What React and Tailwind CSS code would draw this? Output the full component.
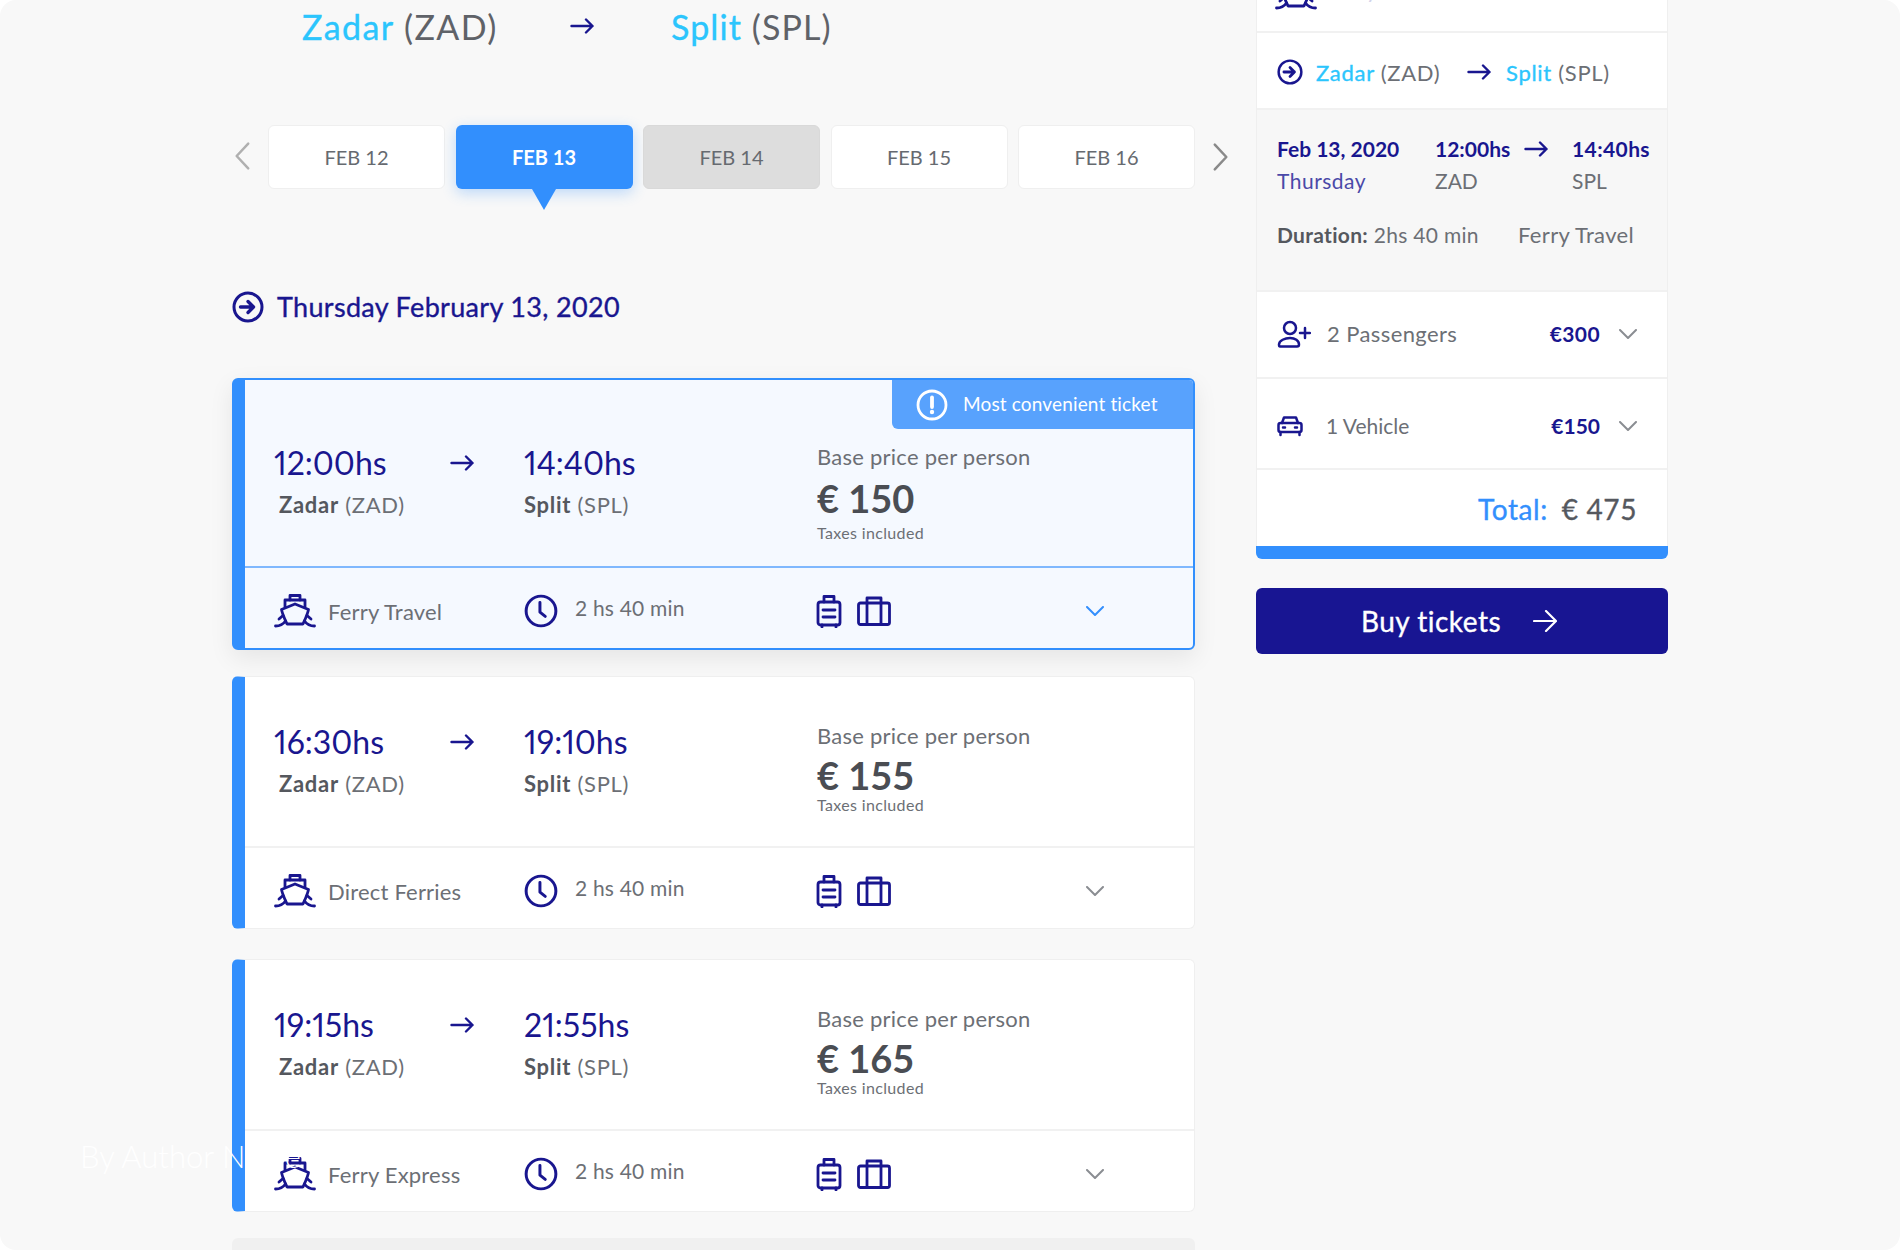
const NAVY = 'text-[#19168f]';
const MEDIUM = '[-webkit-text-stroke:0.35px_currentColor]';

// Small ferry drawing, used in the ticket rows
const ShipIcon = ({ className }) => (
  <svg viewBox="0 0 42 34" fill="none" stroke="currentColor" strokeWidth="2.800" strokeLinejoin="round" strokeLinecap="round" className={className}>
    <path d="M16 6.500V2h10v4.500" />
    <path d="M11 13.500V6.500h20v7" />
    <path d="M21 10.500L7.500 16c1 5 3 9 5.500 14.500h16c2.500-5.500 4.500-9.500 5.500-14.500z" />
    <path d="M1.500 32.500c4.500 0 7.500-1.500 10-5M40.500 32.500c-4.500 0-7.500-1.500-10-5" />
    <path d="M9 22l-4 3.500M33 22l4 3.500" />
  </svg>
);

const ClockIcon = ({ className }) => (
  <svg viewBox="0 0 32 32" fill="none" stroke="currentColor" strokeWidth="2.800" strokeLinecap="round" strokeLinejoin="round" className={className}>
    <circle cx="16" cy="16" r="14" />
    <path d="M15 8v9l5 4" />
  </svg>
);

const BagIcon = ({ className }) => (
  <svg viewBox="0 0 26 34" fill="none" stroke="currentColor" strokeWidth="2.800" strokeLinejoin="round" strokeLinecap="round" className={className}>
    <rect x="2" y="8" width="22" height="23" rx="2.500" />
    <path d="M8 8V2.500h10V8M7 16h12M7 23h12M6 31v2M20 31v2" />
  </svg>
);

const CaseIcon = ({ className }) => (
  <svg viewBox="0 0 34 30" fill="none" stroke="currentColor" strokeWidth="2.800" strokeLinejoin="round" className={className}>
    <rect x="1.500" y="7" width="31" height="21.500" rx="2" />
    <path d="M10 28V2h14v26" />
  </svg>
);

const CircleArrow = ({ className }) => (
  <svg viewBox="0 0 32 32" fill="none" stroke="currentColor" className={className}>
    <circle cx="16" cy="16" r="14" strokeWidth="3" />
    <path d="M8.500 16h13M16 10.500l5.500 5.500-5.500 5.500" strokeWidth="3.400" strokeLinecap="round" strokeLinejoin="round" />
  </svg>
);

const AlertIcon = ({ className }) => (
  <svg viewBox="0 0 32 32" fill="none" stroke="currentColor" className={className}>
    <circle cx="16" cy="16" r="14" strokeWidth="2.800" />
    <path d="M16 8.500v9.500" strokeWidth="3.800" strokeLinecap="round" />
    <circle cx="16" cy="23" r="2.200" fill="currentColor" stroke="none" />
  </svg>
);

const UserPlusIcon = ({ className }) => (
  <svg viewBox="0 0 34 28" fill="none" stroke="currentColor" strokeWidth="2.500" strokeLinecap="round" strokeLinejoin="round" className={className}>
    <circle cx="13" cy="8" r="6" />
    <path d="M3 26.500h17a2 2 0 0 0 2-2c0-4-4-6.500-9-6.500s-11 2.500-11 6.500c0 1 .500 2 1 2z" />
    <path d="M28 8v10M23 13h10" />
  </svg>
);

const CarIcon = ({ className }) => (
  <svg viewBox="0 0 26 22" fill="none" stroke="currentColor" strokeWidth="2.500" strokeLinecap="round" strokeLinejoin="round" className={className}>
    <path d="M5 8l2-5.500h12L21 8" />
    <rect x="1.500" y="8" width="23" height="9" rx="2" />
    <path d="M3.500 17v3M22.500 17v3" />
    <path d="M6 12.500h2M18 12.500h2" />
  </svg>
);

const Arrow = ({ className }) => (
  <svg viewBox="0 0 24 16" fill="none" stroke="currentColor" strokeWidth="2.400" strokeLinecap="round" strokeLinejoin="round" className={`w-6 h-4 shrink-0 ${className}`}>
    <path d="M1.500 8h21M16 1.500L22.500 8 16 14.500" />
  </svg>
);

const ChevronDown = ({ className }) => (
  <svg viewBox="0 0 18 10" fill="none" stroke="currentColor" strokeWidth="2" strokeLinecap="round" strokeLinejoin="round" className={`w-[18px] h-[10px] shrink-0 ${className}`}>
    <path d="M1 1l8 8 8-8" />
  </svg>
);

const dates = [
  { label: 'FEB 12', tone: 'bg-white text-[#666a70] border border-[#efefef]' },
  { label: 'FEB 13', tone: 'bg-[#328ffd] text-white font-bold shadow-[0_4px_14px_rgba(50,143,253,0.3)]', active: true },
  { label: 'FEB 14', tone: 'bg-[#dddddd] text-[#666a70] border border-[#d9d9d9]' },
  { label: 'FEB 15', tone: 'bg-white text-[#666a70] border border-[#efefef]' },
  { label: 'FEB 16', tone: 'bg-white text-[#666a70] border border-[#efefef]' },
];

const tickets = [
  { depart: '12:00hs', arrive: '14:40hs', price: '€ 150', operator: 'Ferry Travel', selected: true, space: 'mb-[26px]' },
  { depart: '16:30hs', arrive: '19:10hs', price: '€ 155', operator: 'Direct Ferries', space: 'mb-[30px]' },
  { depart: '19:15hs', arrive: '21:55hs', price: '€ 165', operator: 'Ferry Express', space: 'mb-[26px]' },
];

const TicketCard = ({ ticket }) => {
  const { depart, arrive, price, operator, selected, space } = ticket;
  return (
    <div
      className={`relative flex rounded-md overflow-hidden border-l-[13px] border-l-[#328ffd] ${space} ${
        selected
          ? 'h-[272px] bg-[#f5f9ff] border-y-2 border-r-2 border-[#328ffd] shadow-[0_8px_24px_rgba(0,0,0,0.08)]'
          : 'h-[253px] bg-white border-y border-r border-[#efefef]'
      }`}
    >
      {selected && (
        <div className="absolute top-0 right-0 flex items-center gap-[15px] w-[301px] h-[49px] pl-6 bg-[#58a2fd] rounded-bl-md text-white text-[19px] tracking-[0.15px]">
          <AlertIcon className="w-8 h-8" />
          <span>Most convenient ticket</span>
        </div>
      )}
      <div className="flex flex-col flex-1">
        <div className={`flex flex-1 pl-[29px] border-b-2 ${selected ? 'border-[#7fb8fe] pt-[63px]' : 'border-[#f1f1f1] pt-[45px]'}`}>
          <div className="w-[250px]">
            <div className="flex items-center">
              <span className={`w-[176px] text-[32px] leading-[40px] proportional-nums ${NAVY}`}>{depart}</span>
              <Arrow className={NAVY} />
            </div>
            <p className="mt-2 pl-[5px] text-[22px] tracking-[0.7px] leading-7 text-[#6c6f75]">
              <span className="font-bold text-[#55585e]">Zadar</span> (ZAD)
            </p>
          </div>
          <div className="w-[293px]">
            <span className={`block text-[32px] leading-[40px] proportional-nums ${NAVY}`}>{arrive}</span>
            <p className="mt-2 text-[22px] tracking-[0.7px] leading-7 text-[#6c6f75]">
              <span className="font-bold text-[#55585e]">Split</span> (SPL)
            </p>
          </div>
          <div>
            <p className="text-[22px] tracking-[0.25px] leading-7 text-[#6c6f75]">Base price per person</p>
            <p className={`text-[38px] font-bold text-[#4a4d53] ${selected ? 'leading-[44px] mt-[5px]' : 'leading-[39px] mt-[6px]'}`}>{price}</p>
            <p className={`text-[16px] tracking-[0.35px] leading-5 text-[#6c6f75] ${selected ? 'mt-[3px]' : ''}`}>Taxes included</p>
          </div>
        </div>
        <div className="flex items-center h-[80px] pt-[5px] pl-[29px]">
          <div className="flex items-center w-[249px]">
            <ShipIcon className={`w-[42px] h-[35px] ${NAVY}`} />
            <span className="ml-3 mt-[1px] text-[22px] tracking-[0.2px] text-[#6c6f75]">{operator}</span>
          </div>
          <div className="flex items-center w-[293px] pl-[1px]">
            <ClockIcon className={`w-[34px] h-[34px] ${NAVY}`} />
            <span className="ml-[17px] -mt-[5px] text-[21px] tracking-[0.2px] text-[#6c6f75]">2 hs 40 min</span>
          </div>
          <BagIcon className={`w-[26px] h-[34px] ${NAVY}`} />
          <CaseIcon className={`ml-[15px] w-[34px] h-[30px] ${NAVY}`} />
          <ChevronDown className={`ml-[195px] ${selected ? 'text-[#328ffd]' : 'text-[#8a8d92]'}`} />
        </div>
      </div>
    </div>
  );
};

const App = () => {
  return (
    <div
      className="relative h-[1250px] overflow-hidden rounded-2xl bg-[#f8f8f8] flex gap-[61px] pl-[232px]"
      style={{ fontFamily: 'Lato, "Noto Sans", sans-serif' }}
    >
      {/* ===== Results column ===== */}
      <div className="w-[963px] shrink-0">
        <div className="flex items-center h-[52px] pl-[70px] text-[34px] tracking-[1.1px] text-[#5f6268]">
          <span className="w-[268px] tracking-[1.4px]">
            <span className={`text-[#2bc5fd] ${MEDIUM}`}>Zadar</span> (ZAD)
          </span>
          <Arrow className={NAVY} />
          <span className="ml-[77px]">
            <span className={`text-[#2bc5fd] ${MEDIUM}`}>Split</span> (SPL)
          </span>
        </div>

        {/* Date picker */}
        <div className="flex items-center mt-[73px] -mr-[34px]">
          <svg viewBox="0 0 18 32" fill="none" stroke="currentColor" strokeWidth="2.800" strokeLinecap="round" strokeLinejoin="round" className="w-[16px] h-[30px] ml-[2px] mr-[18px] -mt-[2px] text-[#b0b0b0]">
            <path d="M16 2L3 16l13 14" />
          </svg>
          <div className="flex gap-[10.500px]">
            {dates.map((d) => (
              <div key={d.label} className={`relative flex items-center justify-center w-[177px] h-[64px] rounded-md text-[20px] ${d.tone}`}>
                {d.label}
                {d.active && (
                  <span className="absolute left-1/2 -translate-x-1/2 top-full w-0 h-0 border-x-[12px] border-x-transparent border-t-[21px] border-t-[#328ffd]" />
                )}
              </div>
            ))}
          </div>
          <svg viewBox="0 0 18 32" fill="none" stroke="currentColor" strokeWidth="2.800" strokeLinecap="round" strokeLinejoin="round" className="w-[16px] h-[30px] ml-[18px] text-[#8a8a8a]">
            <path d="M2 2l13 14L2 30" />
          </svg>
        </div>

        <div className={`flex items-center gap-[13px] mt-[101px] ${NAVY}`}>
          <CircleArrow className="w-8 h-8" />
          <h2 className={`text-[27px] tracking-[0.33px] leading-[34px] ${MEDIUM}`}>Thursday February 13, 2020</h2>
        </div>

        <div className="flex flex-col mt-[54px]">
          {tickets.map((t) => (
            <TicketCard key={t.depart} ticket={t} />
          ))}
          <div className="h-[60px] rounded-md bg-[#f0f0f0]" />
        </div>
      </div>

      {/* ===== Summary column ===== */}
      <div className="w-[412px] shrink-0">
        <div className="flex flex-col bg-white border-x border-[#efefef]">
          <div className="relative h-[33px] overflow-hidden border-b-2 border-[#f1f1f1]">
            <ShipIcon className={`absolute left-[18px] -top-[25px] w-[42px] h-[35px] ${NAVY}`} />
            <span className="absolute left-[70px] -top-[24px] text-[22px] leading-7 text-[#d3d3ea]">Ferry Travel</span>
          </div>
          <div className="flex items-center h-[77px] pt-[3px] pl-[20px] border-b-2 border-[#f1f1f1] text-[22px] tracking-[0.7px] text-[#6c6f75]">
            <CircleArrow className={`w-[26px] h-[26px] ${NAVY}`} />
            <span className="ml-[13px] w-[151px]">
              <span className={`text-[#2bc5fd] ${MEDIUM}`}>Zadar</span> (ZAD)
            </span>
            <Arrow className={NAVY} />
            <span className="ml-[15px]">
              <span className={`text-[#2bc5fd] ${MEDIUM}`}>Split</span> (SPL)
            </span>
          </div>
          <div className="h-[182px] pl-[20px] pt-[25px] bg-[#f7f7f7] border-b-2 border-[#f1f1f1]">
            <div className="flex">
              <div className="w-[158px]">
                <p className={`text-[21px] leading-7 font-bold ${NAVY}`}>Feb 13, 2020</p>
                <p className="mt-1 text-[21px] tracking-[0.5px] leading-7 text-[#4a49a8]">Thursday</p>
              </div>
              <div className="w-[89px]">
                <p className={`text-[21px] leading-7 font-bold ${NAVY}`}>12:00hs</p>
                <p className="mt-1 text-[21px] leading-7 text-[#6c6f75]">ZAD</p>
              </div>
              <Arrow className={`mt-[6px] ${NAVY}`} />
              <div className="ml-[24px]">
                <p className={`text-[21px] tracking-[0.4px] leading-7 font-bold ${NAVY}`}>14:40hs</p>
                <p className="mt-1 text-[21px] leading-7 text-[#6c6f75]">SPL</p>
              </div>
            </div>
            <div className="flex mt-[26px] text-[21px] tracking-[0.3px] leading-7 text-[#6c6f75]">
              <p className="w-[241px]">
                <span className="font-bold text-[#55585e]">Duration:</span> 2hs 40 min
              </p>
              <p className="text-[22px] tracking-[0.35px]">Ferry Travel</p>
            </div>
          </div>
          <div className="flex items-center h-[87px] pb-[2px] pl-[20px] pr-[30px] border-b-2 border-[#f1f1f1]">
            <UserPlusIcon className={`w-[34px] h-[28px] ${NAVY}`} />
            <span className="ml-[16px] text-[22px] tracking-[0.4px] text-[#6c6f75]">2 Passengers</span>
            <span className={`ml-auto text-[21px] tracking-[0.4px] font-bold ${NAVY}`}>€300</span>
            <ChevronDown className="ml-[19px] text-[#8a8d92]" />
          </div>
          <div className="flex items-center h-[91px] pt-[4px] pl-[20px] pr-[30px] border-b-2 border-[#f1f1f1]">
            <CarIcon className={`w-[26px] h-[22px] ${NAVY}`} />
            <span className="ml-[23px] text-[21px] text-[#6c6f75]">1 Vehicle</span>
            <span className={`ml-auto text-[21px] font-bold ${NAVY}`}>€150</span>
            <ChevronDown className="ml-[19px] text-[#8a8d92]" />
          </div>
          <div className={`flex items-center justify-end h-[76px] pt-[1px] pr-[30px] text-[28px] tracking-[0.6px] ${MEDIUM}`}>
            <span className="text-[#328ffd]">Total:</span>
            <span className="ml-[14px] text-[#55585e]">€ 475</span>
          </div>
        </div>
        <div className="h-[13px] bg-[#328ffd] rounded-b-md" />
        <button className={`flex items-center justify-center gap-[32px] w-full h-[66px] mt-[29px] pr-[6px] rounded-md bg-[#181592] text-white text-[28px] tracking-[0.5px] ${MEDIUM}`}>
          Buy tickets
          <svg viewBox="0 0 24 22" fill="none" stroke="currentColor" strokeWidth="2.200" strokeLinecap="round" strokeLinejoin="round" className="w-6 h-[22px]">
            <path d="M1 11h22M13 1l10 10-10 10" />
          </svg>
        </button>
      </div>

      {/* Watermark that lies over the page */}
      <div className="absolute left-[80px] top-[1137px] text-[31px] leading-[38px] font-light text-white whitespace-nowrap">
        By Author Name
      </div>
    </div>
  );
};

export default App;
